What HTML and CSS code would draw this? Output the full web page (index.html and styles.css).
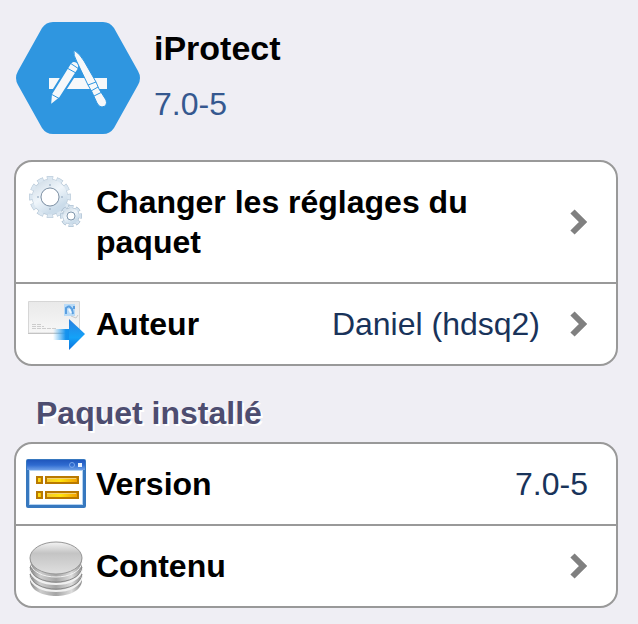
FILE: index.html
```html
<!DOCTYPE html>
<html lang="fr">
<head>
<meta charset="utf-8">
<meta name="viewport" content="width=device-width, initial-scale=1">
<title>iProtect</title>
<link rel="stylesheet" href="styles.css">
</head>
<body>
<header class="package">
  <svg class="package-icon" viewBox="0 0 124 112" aria-hidden="true">
    <path d="M37 0H87Q94 0 98 6L122 49Q126 56 122 63L98 106Q94 112 87 112H37Q30 112 26 106L2 63Q-2 56 2 49L26 6Q30 0 37 0Z" fill="#2f96e0"/>
    <path d="M33 56H91V67H33Z" fill="#f6f8fa"/>
    <g stroke="#2f96e0" stroke-linejoin="round">
      <path d="M53 43Q56 37 61 40Q65 43 62 48L44 76L34 84L35 72Z" fill="#f6f8fa" stroke-width="2"/>
      <path d="M51 46L60 51M54 41L63 47M35 72L44 77" fill="none" stroke-width="1"/>
      <path d="M58 28Q64 32 68 39L80 60L83 67L90 78Q92 84 86 85Q83 85 81 81L76 70L72 63L61 40Q57 33 58 28Z" fill="#f6f8fa" stroke-width="1"/>
      <path d="M72 63L80 60M75 69L82 65M78 74L86 70" fill="none" stroke-width="1"/>
    </g>
  </svg>
  <div class="package-text">
    <h1 class="package-name">iProtect</h1>
    <p class="package-version">7.0-5</p>
  </div>
</header>
<main>
  <section class="card">
    <a class="row row-top" href="#reglages">
      <svg class="icon" viewBox="0 0 60 60" aria-hidden="true">
        <defs>
          <linearGradient id="gear" x1="0" y1="0" x2="0.6" y2="1">
            <stop offset="0" stop-color="#d3dfe9"/><stop offset=".5" stop-color="#f0f6fb"/><stop offset="1" stop-color="#cbdcea"/>
          </linearGradient>
        </defs>
        <circle cx="24" cy="25" r="18" fill="none" stroke="#b3c5d5" stroke-width="6" pathLength="120" stroke-dasharray="6.5 3.5" stroke-dashoffset="3.25"/>
        <circle cx="24" cy="25" r="13.5" fill="none" stroke="#b3c5d5" stroke-width="9"/>
        <circle cx="24" cy="25" r="17.5" fill="none" stroke="#dbe7f1" stroke-width="6" pathLength="120" stroke-dasharray="5.5 4.5" stroke-dashoffset="2.75"/>
        <circle cx="24" cy="25" r="13.5" fill="none" stroke="url(#gear)" stroke-width="8"/>
        <circle cx="24" cy="25" r="9" fill="none" stroke="#8798aa" stroke-width="1"/>
        <g fill="#a7bacd"><circle cx="24" cy="13" r="1"/><circle cx="24" cy="37" r="1"/><circle cx="12" cy="25" r="1"/><circle cx="36" cy="25" r="1"/></g>
        <circle cx="45" cy="44" r="8.5" fill="none" stroke="#a3b8cb" stroke-width="5" pathLength="80" stroke-dasharray="6.5 3.5" stroke-dashoffset="3.25"/>
        <circle cx="45" cy="44" r="6" fill="none" stroke="#a3b8cb" stroke-width="5"/>
        <circle cx="45" cy="44" r="8" fill="none" stroke="#d3e1ed" stroke-width="5" pathLength="80" stroke-dasharray="5.5 4.5" stroke-dashoffset="2.75"/>
        <circle cx="45" cy="44" r="6" fill="none" stroke="url(#gear)" stroke-width="4"/>
        <circle cx="45" cy="44" r="4" fill="#fff" stroke="#8399ae" stroke-width="1"/>
      </svg>
      <span class="label">Changer les réglages du paquet</span>
      <svg class="chevron" viewBox="0 0 18 26" aria-hidden="true"><path d="M2.5 2.5L13 13L2.5 23.5"/></svg>
    </a>
    <a class="row" href="#auteur">
      <svg class="icon" viewBox="0 0 60 60" aria-hidden="true">
        <defs>
          <linearGradient id="paper" x1="0" y1="0" x2="0" y2="1"><stop offset="0" stop-color="#e9e9e9"/><stop offset="1" stop-color="#f7f7f7"/></linearGradient>
          <linearGradient id="tail" x1="0" y1="0" x2="1" y2="0"><stop offset="0" stop-color="#39a9f0" stop-opacity="0"/><stop offset=".75" stop-color="#1593ee"/><stop offset="1" stop-color="#1190ee"/></linearGradient>
          <linearGradient id="head" x1="0" y1="0" x2="0" y2="1"><stop offset="0" stop-color="#2a7fdf"/><stop offset=".6" stop-color="#13a2f8"/><stop offset="1" stop-color="#0b70dc"/></linearGradient>
        </defs>
        <path d="M2.5 7.5H53.5V39H2.5Z" fill="url(#paper)" stroke="#d6d6d6" stroke-width="1"/>
        <path d="M2 39.5H40" stroke="#c4c4c4" stroke-width="1"/>
        <path d="M38 10H49V22H38Z" fill="#b9dbf7"/>
        <path d="M40 20V14L43 12M43 12L46 15L47 20M48 12V15" fill="none" stroke="#5b9fe0" stroke-width="2"/>
        <path d="M43 15L45 19" stroke="#f2f9ff" stroke-width="2"/>
        <path d="M45 22L50 24L52 21" fill="none" stroke="#c7c9cc" stroke-width="1"/>
        <path d="M6 30.5H15M6 32.5H18M6 34.5H31" stroke="#b2b2b2" stroke-width=".6" stroke-dasharray="4 1"/>
        <path d="M27 35H44V46H27Z" fill="url(#tail)"/>
        <path d="M43 25L59 40L43 56Z" fill="url(#head)"/>
      </svg>
      <span class="label">Auteur</span>
      <span class="value">Daniel (hdsq2)</span>
      <svg class="chevron" viewBox="0 0 18 26" aria-hidden="true"><path d="M2.5 2.5L13 13L2.5 23.5"/></svg>
    </a>
  </section>
  <h2 class="section-title">Paquet installé</h2>
  <section class="card">
    <div class="row">
      <svg class="icon" viewBox="0 0 60 60" aria-hidden="true">
        <defs>
          <linearGradient id="bar" x1="0" y1="0" x2="0" y2="1"><stop offset="0" stop-color="#2057bd"/><stop offset=".5" stop-color="#2f6bd0"/><stop offset="1" stop-color="#6ea0e8"/></linearGradient>
          <linearGradient id="gold" x1="0" y1="0" x2="1" y2="0"><stop offset="0" stop-color="#f4c72d"/><stop offset=".45" stop-color="#ffe30c"/><stop offset="1" stop-color="#f09b00"/></linearGradient>
        </defs>
        <rect x="0" y="5" width="60" height="49" rx="2" fill="#3778bf"/>
        <rect x="1" y="6" width="58" height="10" fill="url(#bar)"/>
        <rect x="3" y="16" width="54" height="35" fill="#b4d3f2"/>
        <rect x="4" y="17" width="52" height="33" fill="#fff"/>
        <circle cx="46" cy="11" r="2.5" fill="none" stroke="#78a6ea" stroke-width="1"/>
        <rect x="52" y="9" width="4" height="4" fill="#e9f3ff"/>
        <g stroke="#b97900" stroke-width="2" fill="url(#gold)">
          <rect x="11" y="23" width="5" height="6"/><rect x="20" y="23" width="32" height="6"/>
          <rect x="11" y="38" width="5" height="6"/><rect x="20" y="38" width="32" height="6"/>
        </g>
        <path d="M21 24.5H50M21 39.5H50" stroke="#f3d277" stroke-width="1"/>
      </svg>
      <span class="label">Version</span>
      <span class="value">7.0-5</span>
    </div>
    <a class="row" href="#contenu">
      <svg class="icon" viewBox="0 0 60 60" aria-hidden="true">
        <defs>
          <linearGradient id="side" x1="0" y1="0" x2="1" y2="0"><stop offset="0" stop-color="#858585"/><stop offset=".2" stop-color="#cdcdcd"/><stop offset=".5" stop-color="#a5a5a5"/><stop offset=".8" stop-color="#dddddd"/><stop offset="1" stop-color="#8c8c8c"/></linearGradient>
          <linearGradient id="lid" x1="0" y1="0" x2="0" y2="1"><stop offset="0" stop-color="#f4f4f4"/><stop offset=".35" stop-color="#c4c4c4"/><stop offset="1" stop-color="#dfdfdf"/></linearGradient>
        </defs>
        <path d="M4 22V45C6 65 54 65 56 45V22Z" fill="url(#side)"/>
        <g fill="none" stroke="#f1f1f1" stroke-width="2">
          <path d="M4 40C6 60 54 60 56 40"/>
          <path d="M4 33C6 53 54 53 56 33"/>
          <path d="M4 26C6 46 54 46 56 26" stroke-width="1"/>
        </g>
        <g fill="none" stroke="#8b8b8b" stroke-width="1">
          <path d="M4 38C6 58 54 58 56 38"/>
          <path d="M4 31C6 51 54 51 56 31"/>
        </g>
        <ellipse cx="30" cy="22" rx="26" ry="16" fill="url(#lid)" stroke="#969696" stroke-width="1"/>
      </svg>
      <span class="label">Contenu</span>
      <svg class="chevron" viewBox="0 0 18 26" aria-hidden="true"><path d="M2.5 2.5L13 13L2.5 23.5"/></svg>
    </a>
  </section>
</main>
</body>
</html>
```
FILE: styles.css
```css
* {
  box-sizing: border-box;
}

body {
  margin: 0;
  padding: 22px 20px 16px 14px;
  background: #efeef4;
  color: #000;
  font-family: "Liberation Sans", Arial, sans-serif;
  font-size: 32px;
  line-height: 40px;
}

svg {
  display: block;
  flex: none;
}

.package {
  display: flex;
  align-items: flex-start;
  gap: 14px;
  margin-bottom: 26px;
  padding-left: 2px;
}

.package-icon {
  width: 124px;
  height: 112px;
}

.package-text {
  display: grid;
  gap: 16px;
  padding-top: 6px;
}

.package-name,
.package-version {
  margin: 0;
}

.package-name {
  font-size: 34px;
}

.package-version {
  color: #35588f;
}

.card {
  overflow: hidden;
  border: 2px solid #999;
  border-radius: 18px;
  background: #fff;
}

.row {
  display: flex;
  align-items: center;
  padding: 0 28px 0 10px;
  color: inherit;
  text-decoration: none;
}

.row + .row {
  border-top: 2px solid #999;
}

.icon {
  width: 60px;
  height: 60px;
  margin: 10px 10px 10px 0;
}

.row-top .icon {
  align-self: flex-start;
}

.label {
  flex: 1;
  margin: 20px 0;
  font-weight: bold;
}

.row-top .label {
  padding-right: 60px;
}

.value {
  color: #19335a;
}

.chevron {
  width: 18px;
  height: 26px;
}

.value + .chevron {
  margin-left: 30px;
}

.chevron path {
  fill: none;
  stroke: #808080;
  stroke-width: 6px;
}

.section-title {
  margin: 27px 22px 9px;
  color: #4d4d70;
  font-size: 32px;
  text-shadow: 2px 2px 0 #fff;
}
```
